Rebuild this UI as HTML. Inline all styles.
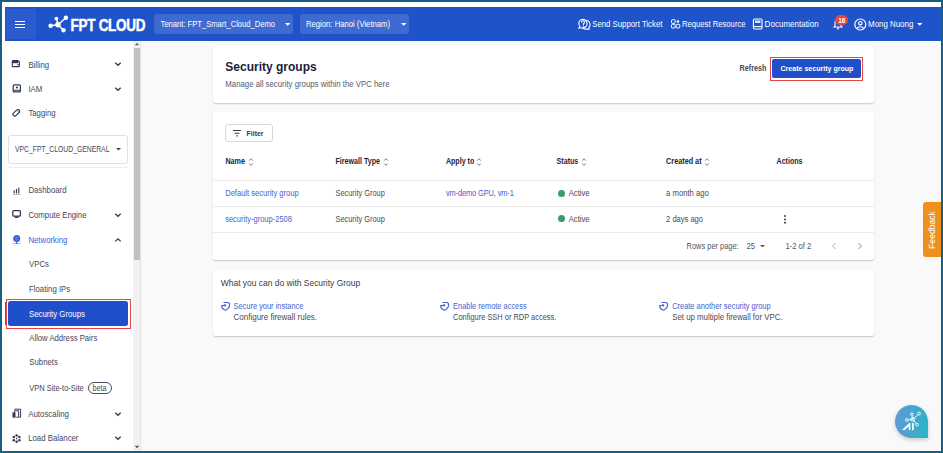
<!DOCTYPE html>
<html><head><meta charset="utf-8"><style>
html,body{margin:0;padding:0;width:943px;height:453px;overflow:hidden;background:#fff}
body{position:relative;font-family:"Liberation Sans", sans-serif}
.t{position:absolute;white-space:nowrap;line-height:1;font-family:"Liberation Sans", sans-serif}
.r{position:absolute;display:block}
</style></head><body>
<div class="r" style="left:0px;top:0px;width:943px;height:453px;background:#ffffff"></div>
<div class="r" style="left:142px;top:41px;width:799px;height:410px;background:#f9f9fa"></div>
<div class="r" style="left:5px;top:7px;width:936px;height:34.3px;background:#1f53ca"></div>
<div class="r" style="left:6px;top:8.8px;width:30.2px;height:30.6px;background:#2b5bcd"></div>
<div class="r" style="left:15px;top:20.6px;width:10px;height:1.4px;background:#fff"></div>
<div class="r" style="left:15px;top:23.7px;width:10px;height:1.4px;background:#fff"></div>
<div class="r" style="left:15px;top:26.6px;width:10px;height:1.4px;background:#fff"></div>
<svg class="r" style="left:45px;top:12px;" width="30" height="24" viewBox="0 0 30 24"><g stroke="#fff" stroke-width="1.4" fill="none"><line x1="13" y1="12.7" x2="11.4" y2="6.6"/><line x1="13" y1="12.7" x2="20.9" y2="5.8"/><line x1="13" y1="12.7" x2="5.6" y2="13.8"/><line x1="13" y1="12.7" x2="18.5" y2="18.3"/></g><g fill="#fff"><circle cx="11.4" cy="6.6" r="1.9"/><circle cx="20.9" cy="5.8" r="2.2"/><circle cx="5.6" cy="13.8" r="2.2"/><circle cx="18.5" cy="18.3" r="2.2"/><circle cx="13" cy="12.7" r="2.7"/></g></svg>
<div class="t" style="left:70.60px;top:20px;font-size:13.5px;font-weight:700;color:#fff;letter-spacing:-0.3px;-webkit-text-stroke:0.4px #fff;transform:scaleY(1.24);transform-origin:0 11px;">FPT CLOUD</div>
<div class="r" style="left:154px;top:14px;width:139px;height:20.3px;background:rgba(255,255,255,0.14);border-radius:3px"></div>
<div class="r" style="left:299.5px;top:14px;width:109.5px;height:20.3px;background:rgba(255,255,255,0.14);border-radius:3px"></div>
<div class="t" style="left:160.60px;top:21px;font-size:7.6px;font-weight:400;color:#fff;transform:scaleY(1.2);transform-origin:0 6px;">Tenant: FPT_Smart_Cloud_Demo</div>
<div class="t" style="left:306.00px;top:21px;font-size:7.7px;font-weight:400;color:#fff;transform:scaleY(1.2);transform-origin:0 6px;">Region: Hanoi (Vietnam)</div>
<svg class="r" style="left:284.6px;top:23.0px;" width="5.4" height="2.8" viewBox="0 0 5.4 2.8"><path d="M0 0 L5.4 0 L2.7 2.8 Z" fill="#fff"/></svg>
<svg class="r" style="left:400.8px;top:23.0px;" width="5.4" height="2.8" viewBox="0 0 5.4 2.8"><path d="M0 0 L5.4 0 L2.7 2.8 Z" fill="#fff"/></svg>
<div class="t" style="left:592.20px;top:21px;font-size:7.8px;font-weight:400;color:#fff;transform:scaleY(1.12);transform-origin:0 6px;">Send Support Ticket</div>
<div class="t" style="left:681.90px;top:21px;font-size:7.7px;font-weight:400;color:#fff;transform:scaleY(1.12);transform-origin:0 6px;">Request Resource</div>
<div class="t" style="left:764.60px;top:21px;font-size:8.05px;font-weight:400;color:#fff;transform:scaleY(1.12);transform-origin:0 6px;">Documentation</div>
<div class="t" style="left:868.10px;top:21px;font-size:7.9px;font-weight:400;color:#fff;transform:scaleY(1.12);transform-origin:0 6px;">Mong Nuong</div>
<svg class="r" style="left:917.0999999999999px;top:22.900000000000002px;" width="5.4" height="2.8" viewBox="0 0 5.4 2.8"><path d="M0 0 L5.4 0 L2.7 2.8 Z" fill="#fff"/></svg>
<svg class="r" style="left:577px;top:18px;" width="14" height="12" viewBox="0 0 14 12"><g stroke="#fff" stroke-width="1.05" fill="none" stroke-linejoin="round" stroke-linecap="round"><path d="M3 8.6 A4.2 4.2 0 1 1 5 9.7 L1.6 10.3 Z"/><path d="M9.4 2.3 A4.3 4.3 0 0 1 11.8 9.6 L12.3 11.1 L8.3 11.1 A4.2 4.2 0 0 1 5.6 10.2"/><path d="M4.7 4.2 a1.4 1.4 0 1 1 1.7 1.4 v0.9"/></g><circle cx="6.4" cy="7.9" r="0.6" fill="#fff"/></svg>
<svg class="r" style="left:670px;top:18px;" width="11" height="12" viewBox="0 0 11 12"><g stroke="#fff" stroke-width="1" fill="none"><rect x="1.5" y="1.7" width="3.7" height="3.7" rx="1"/><rect x="1.5" y="6.3" width="3.7" height="3.7" rx="1"/><rect x="6.1" y="6.3" width="3.7" height="3.7" rx="1"/></g><circle cx="8" cy="3.5" r="1.2" fill="#fff"/></svg>
<svg class="r" style="left:752px;top:18px;" width="12" height="12" viewBox="0 0 12 12"><g stroke="#fff" stroke-width="1.1" fill="none"><rect x="1.4" y="1" width="8.6" height="10" rx="1.2"/><line x1="1.4" y1="8.6" x2="10" y2="8.6"/></g><rect x="3" y="2.4" width="5.4" height="2.6" fill="#fff" opacity="0.85"/></svg>
<svg class="r" style="left:832px;top:17px;" width="12" height="13" viewBox="0 0 12 13"><path d="M2 10 h8 l-1 -1.2 v-3 a3 3 0 0 0 -6 0 v3 z" fill="none" stroke="#fff" stroke-width="1.1"/><circle cx="6" cy="11.4" r="1" fill="#fff"/></svg>
<div class="r" style="left:835.2px;top:14.9px;width:13.2px;height:10.6px;border-radius:6px;background:#e5483c;"></div>
<div class="t" style="left:838.20px;top:18px;font-size:6.5px;font-weight:700;color:#fff;">16</div>
<svg class="r" style="left:853px;top:17px;" width="15" height="15" viewBox="0 0 15 15"><g stroke="#fff" stroke-width="1.2" fill="none"><circle cx="7.3" cy="7.5" r="5.5"/><circle cx="7.3" cy="6.2" r="1.7"/><path d="M3.8 11.6 a3.8 3 0 0 1 7 0"/></g></svg>
<div class="r" style="left:132.8px;top:41.3px;width:7.2px;height:409.7px;background:#f1f1f1"></div>
<div class="r" style="left:140px;top:41.6px;width:1px;height:409.4px;background:#e8e8e8"></div>
<div class="r" style="left:141px;top:41.6px;width:1px;height:409.4px;background:#f4f4f4"></div>
<div class="r" style="left:133.6px;top:48px;width:6.3px;height:212px;background:#c1c1c1"></div>
<svg class="r" style="left:134px;top:42px;" width="6" height="4" viewBox="0 0 6 4"><path d="M0.8 3.2 L3 0.8 L5.2 3.2 Z" fill="#6a6a6a"/></svg>
<svg class="r" style="left:134px;top:445px;" width="6" height="4" viewBox="0 0 6 4"><path d="M0.8 0.8 L3 3.2 L5.2 0.8 Z" fill="#505050"/></svg>
<div class="t" style="left:28.40px;top:62px;font-size:7.8px;font-weight:400;color:#47465c;transform:scaleY(1.2);transform-origin:0 6px;">Billing</div>
<svg class="r" style="left:114.3px;top:60px" width="8.0" height="8" viewBox="114.3 60 8.0 8"><path d="M115.6 62.7 L118.3 65.3 L121.0 62.7" stroke="#34375a" stroke-width="1.25" fill="none"/></svg>
<svg class="r" style="left:10px;top:58px" width="12" height="11" viewBox="10 58 12 11"><path d="M12.9 60.6 H17.9 L19.4 62 V66 Q19.4 66.6 18.8 66.6 H12.9 Q12.3 66.6 12.3 66 V61.2 Q12.3 60.6 12.9 60.6 Z" fill="none" stroke="#34375a" stroke-width="1.15"/><rect x="12.6" y="60.9" width="5.6" height="2.3" fill="#34375a"/><rect x="17.2" y="64.2" width="1.6" height="1" fill="#34375a"/></svg>
<div class="t" style="left:28.40px;top:86px;font-size:7.8px;font-weight:400;color:#47465c;transform:scaleY(1.2);transform-origin:0 6px;">IAM</div>
<svg class="r" style="left:114.3px;top:85px" width="8.0" height="8" viewBox="114.3 85 8.0 8"><path d="M115.6 87.7 L118.3 90.3 L121.0 87.7" stroke="#34375a" stroke-width="1.25" fill="none"/></svg>
<svg class="r" style="left:10px;top:82px" width="13" height="12" viewBox="10 82 13 12"><rect x="13.2" y="84.9" width="7.2" height="7" rx="1" fill="none" stroke="#34375a" stroke-width="1.2"/><line x1="13.2" y1="90.3" x2="20.4" y2="90.3" stroke="#34375a" stroke-width="1"/><circle cx="17" cy="87.5" r="1.1" fill="#34375a"/></svg>
<div class="t" style="left:28.40px;top:110px;font-size:7.8px;font-weight:400;color:#47465c;transform:scaleY(1.2);transform-origin:0 6px;">Tagging</div>
<svg class="r" style="left:10px;top:106px" width="13" height="13" viewBox="10 106 13 13"><path d="M17.2 109.6 L19.4 109.8 L19.6 112 L15.4 116.2 Q14.9 116.7 14.4 116.2 L12.9 114.7 Q12.4 114.2 12.9 113.7 Z" fill="none" stroke="#34375a" stroke-width="1.15" stroke-linejoin="round"/><circle cx="17.9" cy="111.3" r="0.55" fill="#34375a"/></svg>
<div class="r" style="left:8px;top:135px;width:120px;height:28.6px;box-sizing:border-box;border:1px solid #e0e0e0;border-radius:3px;background:#fff"></div>
<div class="t" style="left:15.00px;top:147px;font-size:6.8px;font-weight:400;color:#47465c;transform:scaleY(1.2);transform-origin:0 5px;">VPC_FPT_CLOUD_GENERAL</div>
<svg class="r" style="left:115.7px;top:148.1px;" width="5" height="2.6" viewBox="0 0 5 2.6"><path d="M0 0 L5 0 L2.5 2.6 Z" fill="#4a4a58"/></svg>
<div class="r" style="left:8px;top:167px;width:120px;height:1px;background:#ededed"></div>
<div class="t" style="left:28.40px;top:187px;font-size:7.8px;font-weight:400;color:#47465c;transform:scaleY(1.2);transform-origin:0 6px;">Dashboard</div>
<svg class="r" style="left:10px;top:185px" width="13" height="11" viewBox="10 185 13 11"><g stroke="#34375a" stroke-width="1.15" stroke-linecap="round"><line x1="14.2" y1="190.8" x2="14.2" y2="193"/><line x1="16.5" y1="189.4" x2="16.5" y2="193"/><line x1="18.8" y1="188" x2="18.8" y2="193"/></g><rect x="13" y="194" width="7.6" height="0.7" fill="#34375a" opacity="0.5"/></svg>
<div class="t" style="left:28.40px;top:212px;font-size:7.8px;font-weight:400;color:#47465c;transform:scaleY(1.2);transform-origin:0 6px;">Compute Engine</div>
<svg class="r" style="left:114.3px;top:210.5px" width="8.0" height="8.0" viewBox="114.3 210.5 8.0 8.0"><path d="M115.6 213.2 L118.3 215.8 L121.0 213.2" stroke="#34375a" stroke-width="1.25" fill="none"/></svg>
<svg class="r" style="left:10px;top:207px" width="13" height="13" viewBox="10 207 13 13"><rect x="12.8" y="210.6" width="7.6" height="5.6" rx="0.9" fill="none" stroke="#34375a" stroke-width="1.3"/><rect x="14.8" y="216.4" width="3.6" height="1.6" fill="#34375a"/></svg>
<div class="t" style="left:28.40px;top:237px;font-size:7.8px;font-weight:400;color:#3d5fd6;transform:scaleY(1.2);transform-origin:0 6px;">Networking</div>
<svg class="r" style="left:114.3px;top:236px" width="8.0" height="8" viewBox="114.3 236 8.0 8"><path d="M115.6 241.4 L118.3 238.8 L121.0 241.4" stroke="#34375a" stroke-width="1.25" fill="none"/></svg>
<svg class="r" style="left:10px;top:232px" width="13" height="14" viewBox="10 232 13 14"><circle cx="16.7" cy="238.6" r="3.5" fill="#3d5fd6"/><rect x="15.3" y="237.3" width="2.8" height="0.6" fill="#fff" opacity="0.55"/><rect x="15.3" y="239.6" width="2.8" height="0.6" fill="#fff" opacity="0.55"/><rect x="16.1" y="241.5" width="1.2" height="2" fill="#3d5fd6"/><rect x="13" y="243.2" width="7.6" height="0.8" fill="#3d5fd6" opacity="0.6"/></svg>
<div class="t" style="left:29.00px;top:261px;font-size:7.8px;font-weight:400;color:#47465c;transform:scaleY(1.2);transform-origin:0 6px;">VPCs</div>
<div class="t" style="left:29.00px;top:286px;font-size:7.8px;font-weight:400;color:#47465c;transform:scaleY(1.2);transform-origin:0 6px;">Floating IPs</div>
<div class="r" style="left:4.6px;top:301.8px;width:1.2px;height:23.6px;background:#3f5cc8"></div>
<div class="r" style="left:5.5px;top:298.8px;width:125.3px;height:30.5px;box-sizing:border-box;border:1.5px solid #e84644"></div>
<div class="r" style="left:8px;top:301.2px;width:120px;height:24.6px;background:#1f4fcb;border-radius:2.5px"></div>
<div class="t" style="left:29.00px;top:311px;font-size:7.8px;font-weight:400;color:#fff;transform:scaleY(1.2);transform-origin:0 6px;">Security Groups</div>
<div class="t" style="left:29.30px;top:335px;font-size:7.7px;font-weight:400;color:#47465c;transform:scaleY(1.2);transform-origin:0 6px;">Allow Address Pairs</div>
<div class="t" style="left:29.30px;top:359px;font-size:7.8px;font-weight:400;color:#47465c;transform:scaleY(1.2);transform-origin:0 6px;">Subnets</div>
<div class="t" style="left:29.20px;top:385px;font-size:7.5px;font-weight:400;color:#47465c;transform:scaleY(1.2);transform-origin:0 6px;">VPN Site-to-Site</div>
<div class="r" style="left:88px;top:382px;width:24px;height:12.4px;box-sizing:border-box;border:1px solid #4a4a60;border-radius:7px"></div>
<div class="t" style="left:92.40px;top:385px;font-size:7.2px;font-weight:400;color:#47465c;transform:scaleY(1.2);transform-origin:0 6px;">beta</div>
<div class="t" style="left:28.20px;top:411px;font-size:7.9px;font-weight:400;color:#47465c;transform:scaleY(1.2);transform-origin:0 6px;">Autoscaling</div>
<svg class="r" style="left:114.3px;top:409.7px" width="8.0" height="8.0" viewBox="114.3 409.7 8.0 8.0"><path d="M115.6 412.4 L118.3 415.0 L121.0 412.4" stroke="#34375a" stroke-width="1.25" fill="none"/></svg>
<svg class="r" style="left:10px;top:406px" width="13" height="14" viewBox="10 406 13 14"><rect x="12.5" y="412.3" width="3" height="5.3" fill="#34375a"/><path d="M14.5 412 V410.8 H18.6 V417.2" fill="none" stroke="#34375a" stroke-width="1"/><path d="M14.6 409.6 V409.2 H20.6 V417.4" fill="none" stroke="#34375a" stroke-width="1"/><line x1="15.5" y1="417.2" x2="20.8" y2="417.2" stroke="#34375a" stroke-width="0.8"/></svg>
<div class="t" style="left:28.20px;top:435px;font-size:7.8px;font-weight:400;color:#47465c;transform:scaleY(1.2);transform-origin:0 6px;">Load Balancer</div>
<svg class="r" style="left:114.3px;top:434px" width="8.0" height="8" viewBox="114.3 434 8.0 8"><path d="M115.6 436.7 L118.3 439.3 L121.0 436.7" stroke="#34375a" stroke-width="1.25" fill="none"/></svg>
<svg class="r" style="left:10px;top:431px" width="13" height="15" viewBox="10 431 13 15"><g fill="#34375a"><circle cx="16.6" cy="435.4" r="1.25"/><circle cx="19.4" cy="437.1" r="1.25"/><circle cx="19.4" cy="440.2" r="1.25"/><circle cx="16.6" cy="441.8" r="1.25"/><circle cx="13.8" cy="440.2" r="1.25"/><circle cx="13.8" cy="437.1" r="1.25"/><circle cx="16.6" cy="438.6" r="0.8"/></g></svg>
<div class="r" style="left:213px;top:46px;width:661px;height:57px;background:#fff;border-radius:2.5px;box-shadow:0 1px 1.6px rgba(0,0,0,0.2)"></div>
<div class="r" style="left:213px;top:111.5px;width:661px;height:148.5px;background:#fff;border-radius:2.5px;box-shadow:0 1px 1.6px rgba(0,0,0,0.2)"></div>
<div class="r" style="left:213px;top:269.5px;width:661px;height:66.5px;background:#fff;border-radius:2.5px;box-shadow:0 1px 1.6px rgba(0,0,0,0.2)"></div>
<div class="t" style="left:225.30px;top:61px;font-size:12px;font-weight:700;color:#1b1e3a;">Security groups</div>
<div class="t" style="left:225.30px;top:81px;font-size:7.8px;font-weight:400;color:#555b6e;transform:scaleY(1.1);transform-origin:0 6px;">Manage all security groups within the VPC here</div>
<div class="t" style="left:739.60px;top:65px;font-size:7.2px;font-weight:700;color:#4a4a55;transform:scaleY(1.2);transform-origin:0 6px;">Refresh</div>
<div class="r" style="left:769.6px;top:56.7px;width:93.4px;height:24px;box-sizing:border-box;border:1.5px solid #e84644"></div>
<div class="r" style="left:772px;top:59px;width:89px;height:19.2px;background:#1f4fcb;border-radius:2px"></div>
<div class="t" style="left:780.50px;top:65px;font-size:7.05px;font-weight:700;color:#fff;transform:scaleY(1.15);transform-origin:0 6px;">Create security group</div>
<div class="r" style="left:225.4px;top:124.4px;width:47.4px;height:17.4px;box-sizing:border-box;border:1px solid #d9d9d9;border-radius:3px;background:#fff"></div>
<svg class="r" style="left:231px;top:127px" width="12" height="12" viewBox="231 127 12 12"><g fill="#3a3a4a"><rect x="233" y="130" width="8" height="1"/><rect x="234.5" y="132.8" width="5" height="1"/><rect x="236.1" y="135.4" width="1.8" height="1"/></g></svg>
<div class="t" style="left:246.60px;top:131px;font-size:6.9px;font-weight:700;color:#3a3a4a;transform:scaleY(1.1);transform-origin:0 5px;">Filter</div>
<div class="t" style="left:225.40px;top:158px;font-size:7.2px;font-weight:700;color:#1e1e3c;transform:scaleY(1.18);transform-origin:0 6px;">Name</div>
<svg class="r" style="left:247.70000000000002px;top:155.6px" width="7.0" height="12.0" viewBox="247.70000000000002 155.6 7.0 12.0"><g stroke="#7a7a84" stroke-width="1" fill="none"><path d="M248.9 160.2 L250.70000000000002 158.29999999999998 L252.50000000000003 160.2"/><path d="M248.9 163.1 L250.70000000000002 165.0 L252.50000000000003 163.1"/></g></svg>
<div class="t" style="left:335.50px;top:159px;font-size:7.1px;font-weight:700;color:#1e1e3c;transform:scaleY(1.18);transform-origin:0 5px;">Firewall Type</div>
<svg class="r" style="left:382.59999999999997px;top:155.6px" width="7.0" height="12.0" viewBox="382.59999999999997 155.6 7.0 12.0"><g stroke="#7a7a84" stroke-width="1" fill="none"><path d="M383.79999999999995 160.2 L385.59999999999997 158.29999999999998 L387.4 160.2"/><path d="M383.79999999999995 163.1 L385.59999999999997 165.0 L387.4 163.1"/></g></svg>
<div class="t" style="left:445.90px;top:159px;font-size:7.1px;font-weight:700;color:#1e1e3c;transform:scaleY(1.18);transform-origin:0 5px;">Apply to</div>
<svg class="r" style="left:475.9px;top:155.6px" width="7.0" height="12.0" viewBox="475.9 155.6 7.0 12.0"><g stroke="#7a7a84" stroke-width="1" fill="none"><path d="M477.09999999999997 160.2 L478.9 158.29999999999998 L480.7 160.2"/><path d="M477.09999999999997 163.1 L478.9 165.0 L480.7 163.1"/></g></svg>
<div class="t" style="left:556.60px;top:159px;font-size:7.1px;font-weight:700;color:#1e1e3c;transform:scaleY(1.18);transform-origin:0 5px;">Status</div>
<svg class="r" style="left:580.5px;top:155.6px" width="7.0" height="12.0" viewBox="580.5 155.6 7.0 12.0"><g stroke="#7a7a84" stroke-width="1" fill="none"><path d="M581.7 160.2 L583.5 158.29999999999998 L585.3 160.2"/><path d="M581.7 163.1 L583.5 165.0 L585.3 163.1"/></g></svg>
<div class="t" style="left:666.10px;top:158px;font-size:7.25px;font-weight:700;color:#1e1e3c;transform:scaleY(1.18);transform-origin:0 6px;">Created at</div>
<svg class="r" style="left:704.0px;top:155.6px" width="7.0" height="12.0" viewBox="704.0 155.6 7.0 12.0"><g stroke="#7a7a84" stroke-width="1" fill="none"><path d="M705.2 160.2 L707.0 158.29999999999998 L708.8 160.2"/><path d="M705.2 163.1 L707.0 165.0 L708.8 163.1"/></g></svg>
<div class="t" style="left:776.60px;top:158px;font-size:7.05px;font-weight:700;color:#1e1e3c;transform:scaleY(1.18);transform-origin:0 6px;">Actions</div>
<div class="r" style="left:213px;top:180px;width:661px;height:1px;background:#ebebeb"></div>
<div class="r" style="left:213px;top:206px;width:661px;height:1px;background:#ebebeb"></div>
<div class="r" style="left:213px;top:232px;width:661px;height:1px;background:#ebebeb"></div>
<div class="t" style="left:225.20px;top:190px;font-size:7.55px;font-weight:400;color:#4862cf;transform:scaleY(1.1);transform-origin:0 6px;">Default security group</div>
<div class="t" style="left:335.50px;top:190px;font-size:7.4px;font-weight:400;color:#4a4a55;transform:scaleY(1.1);transform-origin:0 6px;">Security Group</div>
<div class="t" style="left:445.90px;top:190px;font-size:7.45px;font-weight:400;color:#4862cf;letter-spacing:-0.12px;transform:scaleY(1.1);transform-origin:0 6px;">vm-demo GPU, vm-1</div>
<div class="r" style="left:558px;top:189.8px;width:7px;height:7px;background:#3a9c6a;border-radius:50%"></div>
<div class="t" style="left:568.70px;top:190px;font-size:7.7px;font-weight:400;color:#4a4a55;transform:scaleY(1.1);transform-origin:0 6px;">Active</div>
<div class="t" style="left:666.10px;top:190px;font-size:7.7px;font-weight:400;color:#4a4a55;transform:scaleY(1.1);transform-origin:0 6px;">a month ago</div>
<div class="t" style="left:225.20px;top:216px;font-size:7.5px;font-weight:400;color:#4862cf;transform:scaleY(1.1);transform-origin:0 6px;">security-group-2508</div>
<div class="t" style="left:335.50px;top:216px;font-size:7.4px;font-weight:400;color:#4a4a55;transform:scaleY(1.1);transform-origin:0 6px;">Security Group</div>
<div class="r" style="left:558px;top:215.3px;width:7px;height:7px;background:#3a9c6a;border-radius:50%"></div>
<div class="t" style="left:568.70px;top:216px;font-size:7.7px;font-weight:400;color:#4a4a55;transform:scaleY(1.1);transform-origin:0 6px;">Active</div>
<div class="t" style="left:666.10px;top:216px;font-size:7.55px;font-weight:400;color:#4a4a55;transform:scaleY(1.1);transform-origin:0 6px;">2 days ago</div>
<svg class="r" style="left:780px;top:212px" width="10" height="15" viewBox="780 212 10 15"><g fill="#3c3c3c"><circle cx="785" cy="216.1" r="1"/><circle cx="785" cy="219.4" r="1"/><circle cx="785" cy="222.7" r="1"/></g></svg>
<div class="t" style="left:686.60px;top:243px;font-size:7.45px;font-weight:400;color:#55555f;transform:scaleY(1.1);transform-origin:0 6px;">Rows per page:</div>
<div class="t" style="left:746.40px;top:243px;font-size:7.7px;font-weight:400;color:#55555f;transform:scaleY(1.1);transform-origin:0 6px;">25</div>
<svg class="r" style="left:759.8px;top:244.7px;" width="5" height="2.6" viewBox="0 0 5 2.6"><path d="M0 0 L5 0 L2.5 2.6 Z" fill="#55555f"/></svg>
<div class="t" style="left:785.40px;top:243px;font-size:7.6px;font-weight:400;color:#55555f;transform:scaleY(1.1);transform-origin:0 6px;">1-2 of 2</div>
<svg class="r" style="left:831px;top:242px;" width="6" height="8" viewBox="0 0 6 8"><path d="M4.6 1 L1.6 4 L4.6 7" stroke="#a8a8b0" stroke-width="0.9" fill="none"/></svg>
<svg class="r" style="left:857px;top:242px;" width="6" height="8" viewBox="0 0 6 8"><path d="M1.4 1 L4.4 4 L1.4 7" stroke="#7a7a85" stroke-width="0.9" fill="none"/></svg>
<div class="t" style="left:220.80px;top:279px;font-size:8.45px;font-weight:400;color:#3a3a48;">What you can do with Security Group</div>
<svg class="r" style="left:219.8px;top:300.6px;" width="12" height="12" viewBox="0 0 12 12"><g stroke="#4862cf" stroke-width="1.15" fill="none" stroke-linecap="round" stroke-linejoin="round"><path d="M3.9 1.5 H7.6 Q9.6 1.5 9.6 3.6 Q9.6 7.6 5.6 9.2 Q1.8 8 1.6 4.6 L5.2 4.4"/></g><circle cx="5.2" cy="4.4" r="1.05" fill="#4862cf"/></svg>
<div class="t" style="left:233.50px;top:303px;font-size:7.45px;font-weight:400;color:#4862cf;transform:scaleY(1.12);transform-origin:0 6px;">Secure your instance</div>
<div class="t" style="left:233.50px;top:314px;font-size:8.0px;font-weight:400;color:#4a4a55;transform:scaleY(1.12);transform-origin:0 6px;">Configure firewall rules.</div>
<svg class="r" style="left:439px;top:300.8px;" width="12" height="12" viewBox="0 0 12 12"><g stroke="#4862cf" stroke-width="1.15" fill="none" stroke-linecap="round" stroke-linejoin="round"><path d="M3.9 1.5 H7.6 Q9.6 1.5 9.6 3.6 Q9.6 7.6 5.6 9.2 Q1.8 8 1.6 4.6 L5.2 4.4"/></g><circle cx="5.2" cy="4.4" r="1.05" fill="#4862cf"/></svg>
<div class="t" style="left:453.10px;top:303px;font-size:7.45px;font-weight:400;color:#4862cf;transform:scaleY(1.12);transform-origin:0 6px;">Enable remote access</div>
<div class="t" style="left:453.10px;top:314px;font-size:7.45px;font-weight:400;color:#4a4a55;transform:scaleY(1.12);transform-origin:0 6px;">Configure SSH or RDP access.</div>
<svg class="r" style="left:658.2px;top:300.8px;" width="12" height="12" viewBox="0 0 12 12"><g stroke="#4862cf" stroke-width="1.15" fill="none" stroke-linecap="round" stroke-linejoin="round"><path d="M3.9 1.5 H7.6 Q9.6 1.5 9.6 3.6 Q9.6 7.6 5.6 9.2 Q1.8 8 1.6 4.6 L5.2 4.4"/></g><circle cx="5.2" cy="4.4" r="1.05" fill="#4862cf"/></svg>
<div class="t" style="left:672.20px;top:303px;font-size:7.45px;font-weight:400;color:#4862cf;transform:scaleY(1.12);transform-origin:0 6px;">Create another security group</div>
<div class="t" style="left:672.20px;top:314px;font-size:7.85px;font-weight:400;color:#4a4a55;transform:scaleY(1.12);transform-origin:0 6px;">Set up multiple firewall for VPC.</div>
<div class="r" style="left:922.7px;top:202.4px;width:18.3px;height:54.6px;background:#ee8f1e;border-radius:3px 0 0 3px"></div>
<div class="t" style="left:931.8px;top:229.7px;font-size:8.6px;color:#fff;transform:translate(-50%,-50%) rotate(-90deg);line-height:1">Feedback</div>
<div class="r" style="left:894.6px;top:404.6px;width:33.6px;height:33.2px;border-radius:16.8px 16.8px 0 16.8px;background:linear-gradient(90deg,#619ad3,#2db3c8);box-shadow:0 2px 4px rgba(0,0,0,0.18)"></div>
<svg class="r" style="left:900px;top:410px;" width="25" height="25" viewBox="0 0 25 25"><g stroke="#fff" stroke-width="0.9" fill="none"><line x1="12.7" y1="9.4" x2="11.9" y2="5.4"/><line x1="12.7" y1="9.4" x2="17.9" y2="4.8"/><line x1="12.7" y1="9.4" x2="8.3" y2="9.9"/><line x1="12.7" y1="9.4" x2="16.1" y2="13.6"/><circle cx="11.9" cy="4.1" r="1.3"/><circle cx="19" cy="3.6" r="1.4"/><circle cx="6.9" cy="9.9" r="1.4"/><circle cx="17.1" cy="14.6" r="1.4"/><circle cx="12.7" cy="9.4" r="1.9"/></g><path d="M2 20.1 L9.2 13.1 L10.4 13.1 L10.4 20.1 L8.7 20.1 L8.7 16.2 L4.6 20.1 Z" fill="#fff"/><rect x="12" y="13.1" width="1.8" height="7" fill="#fff"/></svg>
<div class="r" style="left:0px;top:0px;width:943px;height:453px;box-sizing:border-box;border:2px solid #175f80;background:transparent"></div>
</body></html>
